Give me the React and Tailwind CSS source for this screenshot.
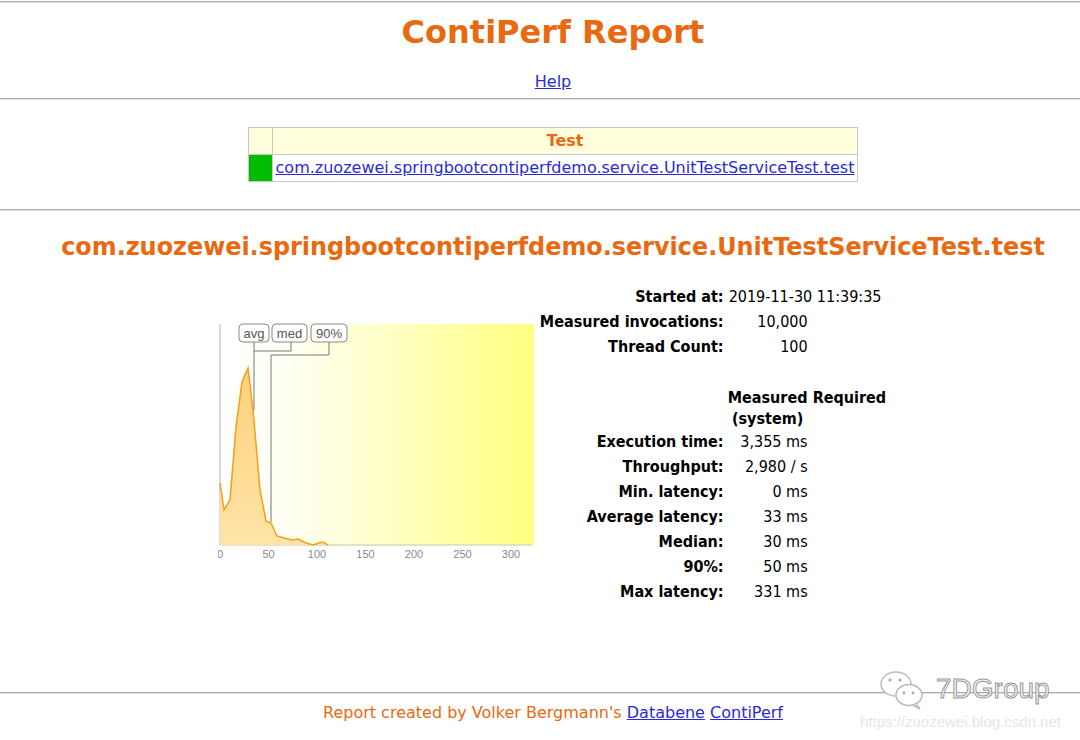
import React from "react";

const orange = "text-[#e8690f]";

const stats = [
  ["Execution time:", "3,355 ms"],
  ["Throughput:", "2,980 / s"],
  ["Min. latency:", "0 ms"],
  ["Average latency:", "33 ms"],
  ["Median:", "30 ms"],
  ["90%:", "50 ms"],
  ["Max latency:", "331 ms"],
];

const curve = [
  [2, 161], [6, 188], [12, 178], [18, 105], [24, 60], [30, 46], [35, 88],
  [42, 168], [48, 199], [53, 201], [59, 214], [74, 218], [80, 217], [84, 219],
  [88, 221], [95, 223], [101, 221], [105, 220], [110, 223],
];

const Chart = () => {
  const line = curve.map((p) => p.join(",")).join(" ");
  const area = `2,223 ${line} 110,223`;
  const ticks = [0, 50, 100, 150, 200, 250, 300];
  return (
    <svg width="318" height="244" viewBox="0 0 318 244">
      <defs>
        <linearGradient id="bg" x1="0" y1="0" x2="1" y2="0">
          <stop offset="0" stopColor="#ffffff" />
          <stop offset="0.25" stopColor="#fffff0" />
          <stop offset="1" stopColor="#ffff80" />
        </linearGradient>
        <linearGradient id="fill" x1="0" y1="0" x2="0" y2="1">
          <stop offset="0" stopColor="#ffd27a" />
          <stop offset="1" stopColor="#ffe3a8" />
        </linearGradient>
      </defs>
      <rect x="2" y="2" width="314" height="221" fill="url(#bg)" />
      <line x1="2" y1="2" x2="2" y2="223" stroke="#cfcfcf" strokeWidth="1.5" />
      <line x1="2" y1="223" x2="314" y2="223" stroke="#d8d8c0" strokeWidth="1.5" />
      <polygon points={area} fill="url(#fill)" />
      <polyline points={line} fill="none" stroke="#f5a21e" strokeWidth="1.6" />
      {/* markers */}
      <path d="M36 20 V88 M73 20 V29 H36 M111 20 V33 H53 V200" fill="none" stroke="#777" strokeWidth="1" />
      {[
        [21, 30, "avg"],
        [54, 35, "med"],
        [93, 36, "90%"],
      ].map(([x, w, t]) => (
        <g key={t}>
          <rect x={x} y="2" width={w} height="18" rx="4" fill="#fff" stroke="#888" strokeWidth="1" />
          <text x={x + w / 2} y="15.5" textAnchor="middle" fontSize="13" fill="#555" fontFamily="Liberation Sans, sans-serif">
            {t}
          </text>
        </g>
      ))}
      {ticks.map((t) => (
        <text key={t} x={2 + t * 0.97} y="236" textAnchor="middle" fontSize="11" fill="#888" fontFamily="Liberation Sans, sans-serif">
          {t}
        </text>
      ))}
    </svg>
  );
};

const Rule = ({ className }) => (
  <div className={`w-full border-t border-[#a8a8a8] border-b border-b-[#e4e4e4] ${className}`} />
);

const App = () => {
  return (
    <div className="relative w-[1080px] h-[740px] overflow-hidden bg-white font-['DejaVu_Sans',sans-serif] text-[16px] text-black">
      <Rule className="mt-[1px]" />

      <div className="pl-[26px] text-center">
        <h1 className={`mt-[9px] text-[32px] leading-[40px] font-bold ${orange}`}>ContiPerf Report</h1>
        <div className="mt-[20px] leading-[20px]">
          <a href="#" className="text-[#2a2ad6] underline">Help</a>
        </div>
      </div>

      <Rule className="mt-[6px]" />

      <div className="pl-[26px] flex justify-center mt-[27px]">
        <table className="border-collapse border border-[#c8c8c8]">
          <tbody>
            <tr className="h-[27px]">
              <td className="w-[24px] bg-[#ffffdd] border border-[#c8c8c8]" />
              <td className={`bg-[#ffffdd] border border-[#c8c8c8] text-center font-bold ${orange}`}>Test</td>
            </tr>
            <tr className="h-[27px]">
              <td className="bg-[#00bb00] border border-[#c8c8c8]" />
              <td className="border border-[#c8c8c8] px-[3px]">
                <a href="#" className="text-[#2a2ad6] underline">
                  com.zuozewei.springbootcontiperfdemo.service.UnitTestServiceTest.test
                </a>
              </td>
            </tr>
          </tbody>
        </table>
      </div>

      <Rule className="mt-[27px]" />

      <h2 className={`pl-[26px] mt-[20px] text-center text-[23.9px] leading-[32px] font-bold ${orange}`}>
        com.zuozewei.springbootcontiperfdemo.service.UnitTestServiceTest.test
      </h2>

      <div className="pl-[24px] mt-[21px] flex justify-center items-center font-['DejaVu_Sans_Condensed','DejaVu_Sans',sans-serif]">
        <div className="mr-[4px]">
          <Chart />
        </div>
        <table className="border-separate border-spacing-0">
          <tbody>
            <tr className="h-[25px]">
              <td className="text-right font-bold pr-[4px]">Started at:</td>
              <td colSpan={2} className="pl-[1px] text-left">2019-11-30 11:39:35</td>
            </tr>
            <tr className="h-[25px]">
              <td className="text-right font-bold pr-[4px]">Measured invocations:</td>
              <td className="text-right w-[80px]">10,000</td>
              <td className="w-[76px]" />
            </tr>
            <tr className="h-[25px]">
              <td className="text-right font-bold pr-[4px]">Thread Count:</td>
              <td className="text-right">100</td>
              <td />
            </tr>
            <tr className="h-[25px]">
              <td colSpan={3} />
            </tr>
            <tr>
              <td />
              <td className="text-center font-bold leading-[21px] pt-[3px]">
                Measured
                <br />
                (system)
              </td>
              <td className="align-top pt-[3px] pl-[5px] font-bold leading-[21px]">Required</td>
            </tr>
            {stats.map(([k, v]) => (
              <tr key={k} className="h-[25px]">
                <td className="text-right font-bold pr-[4px]">{k}</td>
                <td className="text-right">{v}</td>
                <td />
              </tr>
            ))}
          </tbody>
        </table>
      </div>

      <div className="absolute left-0 right-0 top-[692px]">
        <Rule />
        <div className={`pl-[26px] mt-[7px] text-center ${orange}`}>
          Report created by Volker Bergmann's{" "}
          <a href="#" className="text-[#2a2ad6] underline">Databene</a>{" "}
          <a href="#" className="text-[#2a2ad6] underline">ContiPerf</a>
        </div>
      </div>

      {/* watermark */}
      <div className="absolute left-[878px] top-[668px] flex items-center gap-[6px] pointer-events-none">
        <svg width="52" height="42" viewBox="0 0 52 42">
          <ellipse cx="18" cy="16" rx="15" ry="12" fill="#fff" stroke="#bbb" strokeWidth="1.5" />
          <circle cx="12" cy="12" r="1.6" fill="#aaa" />
          <circle cx="22" cy="12" r="1.6" fill="#aaa" />
          <ellipse cx="31" cy="27" rx="13" ry="10.5" fill="#fff" stroke="#bbb" strokeWidth="1.5" />
          <circle cx="26" cy="25" r="1.4" fill="#aaa" />
          <circle cx="35" cy="25" r="1.4" fill="#aaa" />
          <path d="M38 36 L42 41 L35 37" fill="#fff" stroke="#bbb" strokeWidth="1.5" />
        </svg>
        <span className="font-['Liberation_Sans',sans-serif] text-[28px] leading-[34px] text-[#f4f4f4] [-webkit-text-stroke:1px_#9a9a9a]">
          7DGroup
        </span>
      </div>
      <div className="absolute left-[860px] top-[711px] font-['Liberation_Sans',sans-serif] text-[15px] text-[#e6e6e6]">
        https://zuozewei.blog.csdn.net
      </div>
    </div>
  );
};

export default App;
